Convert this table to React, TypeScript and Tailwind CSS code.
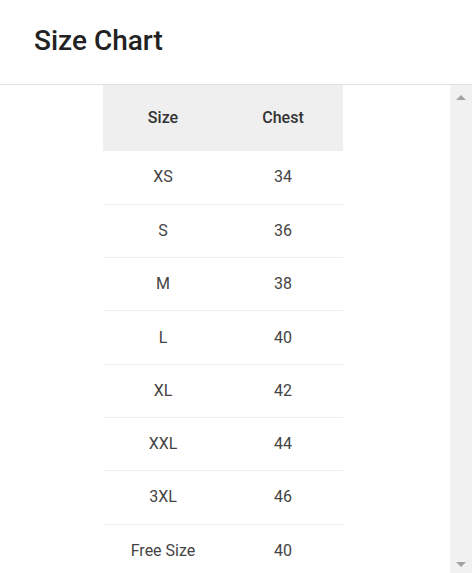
const rows: [string, string][] = [
  ['XS', '34'],
  ['S', '36'],
  ['M', '38'],
  ['L', '40'],
  ['XL', '42'],
  ['XXL', '44'],
  ['3XL', '46'],
  ['Free Size', '40'],
]

export default function App() {
  return (
    <div className="flex h-[573px] w-[472px] flex-col overflow-hidden bg-white font-['Roboto',sans-serif] text-[#222]">
      <div className="flex h-[85px] shrink-0 items-center border-b border-[#e0e0e0] px-[34px] pb-[2px]">
        <h1 className="text-[28px] font-medium leading-none">Size Chart</h1>
      </div>
      <div className="flex min-h-0 flex-1">
        <div className="flex-1 overflow-hidden pl-[103px]">
          <table className="w-[240px] border-collapse text-center text-base">
            <thead>
              <tr className="h-[66px] bg-[#efefef]">
                <th className="w-[120px] font-medium text-[#333]">Size</th>
                <th className="w-[120px] font-medium text-[#333]">Chest</th>
              </tr>
            </thead>
            <tbody className="text-[#444]">
              {rows.map(([size, chest], i) => (
                <tr key={i} className="h-[53.3px] border-b border-[#eee] last:border-b-0">
                  <td>{size}</td>
                  <td>{chest}</td>
                </tr>
              ))}
            </tbody>
          </table>
        </div>
        <div className="flex w-[22px] shrink-0 flex-col items-center justify-between bg-[#f1f1f1] pt-[10px] pb-[6px]">
          <div className="h-0 w-0 border-x-[5px] border-b-[5px] border-x-transparent border-b-[#a3a3a3]" />
          <div className="h-0 w-0 border-x-[5px] border-t-[5px] border-x-transparent border-t-[#a3a3a3]" />
        </div>
      </div>
    </div>
  )
}
